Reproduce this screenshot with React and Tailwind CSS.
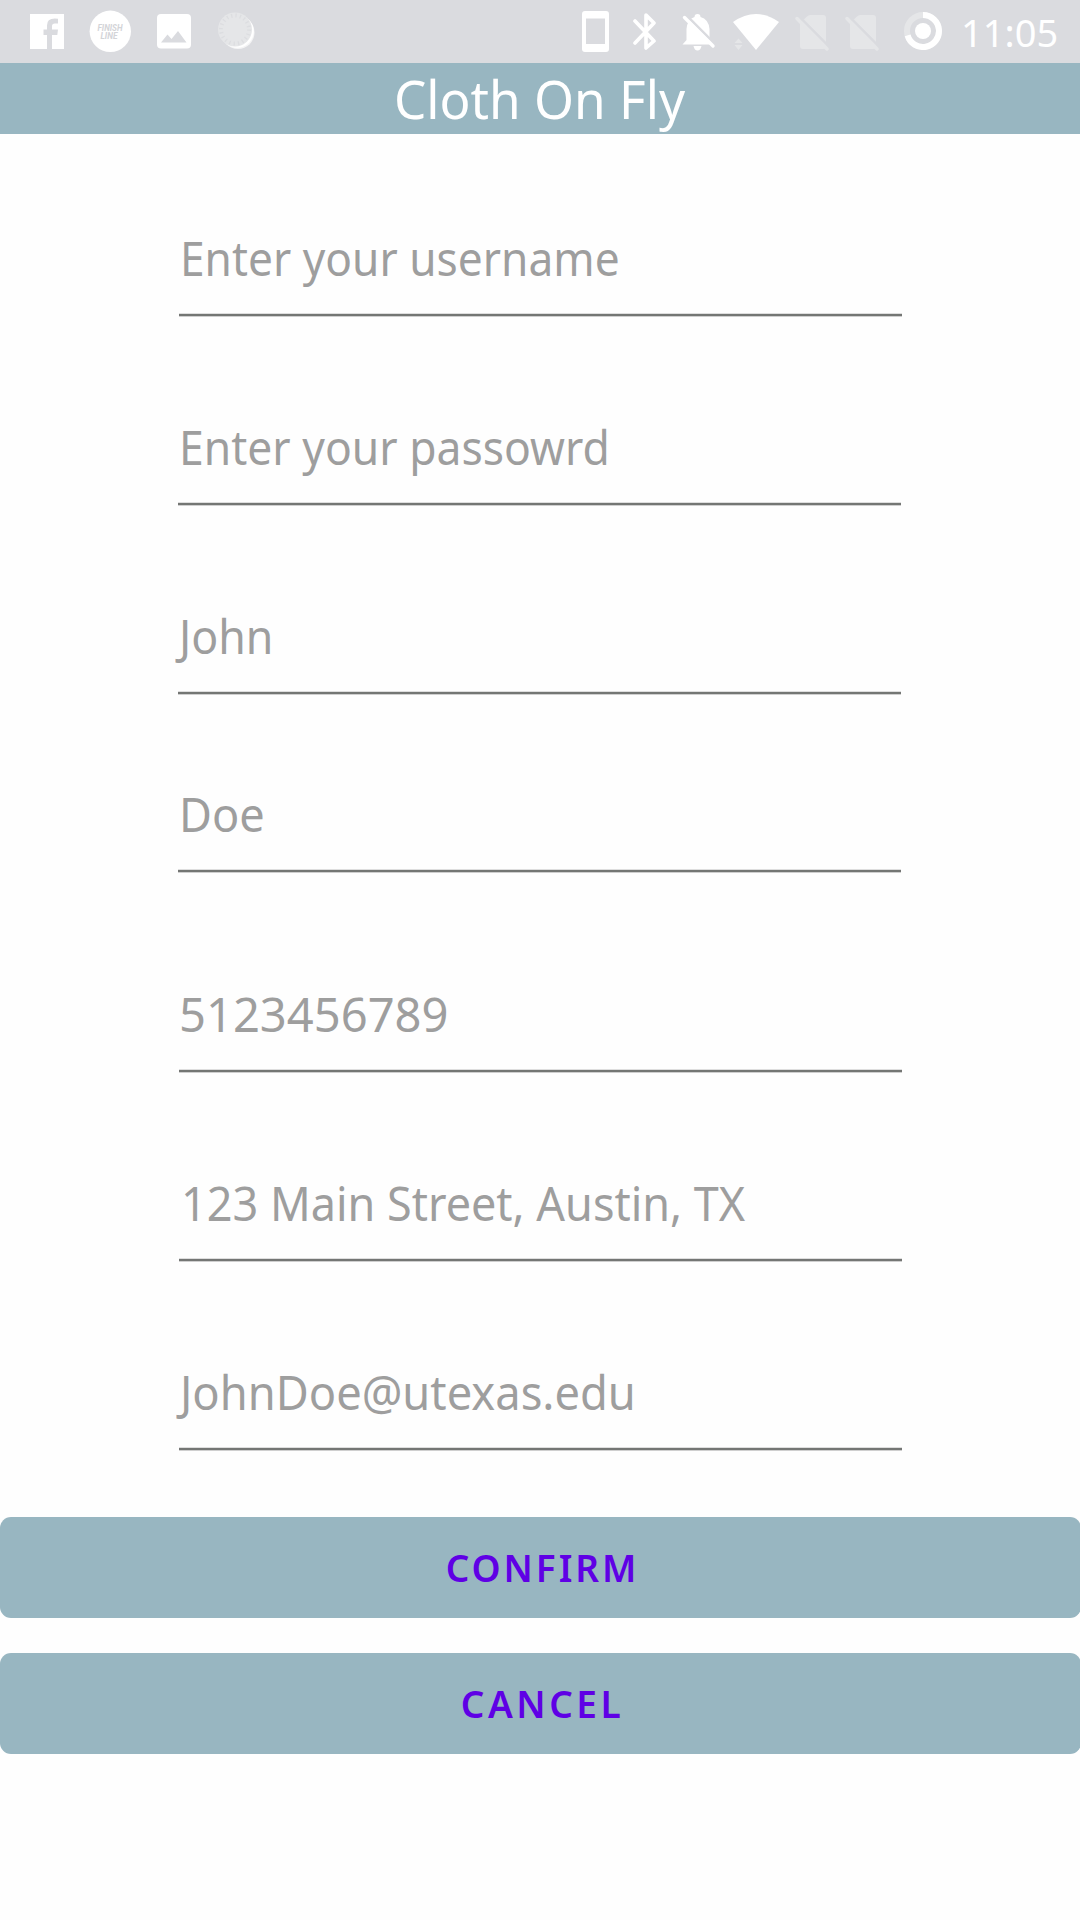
const fields = [
  { text: 'Enter your username', gap: 'mt-[93px]', line: 'ml-[179px]', fit: 'ml-[0.500px] scale-x-[0.932]' },
  { text: 'Enter your passowrd', gap: 'mt-[100px]', line: 'ml-[178px]', fit: 'ml-[0.500px] scale-x-[0.936]' },
  { text: 'John', gap: 'mt-[100px]', line: 'ml-[178px]', fit: 'ml-[1px] scale-x-[0.940]' },
  { text: 'Doe', gap: 'mt-[89px]', line: 'ml-[178px]', fit: 'ml-[1px] scale-x-[0.950]' },
  { text: '5123456789', gap: 'mt-[111px]', line: 'ml-[179px]', fit: 'scale-x-[0.992]' },
  { text: '123 Main Street, Austin, TX', gap: 'mt-[100px]', line: 'ml-[179px]', fit: 'ml-[2px] scale-x-[0.947]' },
  { text: 'JohnDoe@utexas.edu', gap: 'mt-[100px]', line: 'ml-[179px]', fit: 'ml-[1px] scale-x-[0.953]' },
];

function SimOff({ className }) {
  return (
    <svg className={className} width="36" height="40" viewBox="0 0 36 40">
      <path d="M6 9 L12 3.500 Q13.500 2 15 2 H28 Q31 2 31 5 V33 Q31 36 28 36 H8 Q5 36 5 33 V10 Z" fill="#e5e6e8" />
      <path d="M4 3.500 L36 35.500" stroke="#dadbdf" strokeWidth="2.500" />
      <path d="M2 5.500 L32 36" stroke="#e5e6e8" strokeWidth="3.400" strokeLinecap="round" />
    </svg>
  );
}

function StatusBar() {
  return (
    <div className="flex h-[63px] w-full shrink-0 items-start bg-[#dadbdf] text-white">
      <svg className="ml-[30px] mt-[14px] shrink-0" width="34" height="35" viewBox="0 0 34 35">
        <path fill="#fff" d="M0 0H34V35H22V21H27.300L28 15.500H22V12Q22 9.500 24.800 9.500H28V4.800Q16.800 3.300 17 11.500V15.500H13.500V21H17V35H0Z" />
      </svg>
      <svg className="ml-[25px] mt-[10px] shrink-0" width="42" height="42" viewBox="0 0 42 42">
        <circle cx="21.300" cy="21.300" r="20.700" fill="#fff" />
        <g fill="#d3d4d8" fontFamily="Roboto" fontSize="9" fontWeight="700" fontStyle="italic" textAnchor="middle">
          <text x="21" y="21.300" textLength="25" lengthAdjust="spacingAndGlyphs">FINISH</text>
          <text x="20" y="29.300" textLength="17" lengthAdjust="spacingAndGlyphs">LINE</text>
        </g>
      </svg>
      <svg className="ml-[26px] mt-[14px] shrink-0" width="34" height="35" viewBox="0 0 34 35">
        <rect width="34" height="34.500" rx="4" fill="#fff" />
        <path d="M4 28.500L10.500 20.500L14.500 25L21 17L29.500 28.500Z" fill="#dadbdf" />
      </svg>
      <svg className="ml-[26px] mt-[11px] shrink-0" width="39" height="39" viewBox="0 0 39 39">
        <circle cx="21" cy="21.500" r="16.500" fill="#f4f4f5" />
        <circle cx="20.300" cy="20.300" r="16.500" fill="#fff" />
        <circle cx="18" cy="18.500" r="17" fill="#e5e6e8" />
        <circle cx="18" cy="18.500" r="14" fill="none" stroke="#dcdde0" strokeWidth="4" strokeDasharray="1.300 3.100" />
      </svg>
      <svg className="ml-[326px] mt-[11px] shrink-0" width="27" height="41" viewBox="0 0 27 41">
        <path fill="#fff" fillRule="evenodd" d="M3 0H24Q27 0 27 3V38Q27 41 24 41H3Q0 41 0 38V3Q0 0 3 0ZM4 7.500V33H23V7.500Z" />
      </svg>
      <svg className="ml-[24px] mt-[13px] shrink-0" width="24" height="38" viewBox="0 0 24 38">
        <path d="M2 8L21 28L13 35V2L21 10L2 30" fill="none" stroke="#fff" strokeWidth="3.600" strokeLinejoin="round" strokeLinecap="round" />
      </svg>
      <svg className="ml-[25px] mt-[13px] shrink-0" width="34" height="38" viewBox="0 0 34 38">
        <path fill="#fff" d="M12.500 4Q12.500 1 15.500 1T18.500 4Q26.500 6 27.500 16V27L31.500 31.500H0.500L4.500 27V16Q5.500 6 12.500 4ZM11.500 33H19.500Q18.500 37.500 15.500 37.500T11.500 33Z" />
        <path d="M4 2L34 32" stroke="#dadbdf" strokeWidth="2.500" />
        <path d="M2.500 4.500L31 33" stroke="#fff" strokeWidth="3.400" strokeLinecap="round" />
      </svg>
      <svg className="ml-[17px] mt-[13px] shrink-0" width="46" height="38" viewBox="0 0 46 38">
        <path fill="#fff" d="M0 9Q23 -7 46 9L23 37Z" />
        <path fill="#e5e6e8" d="M1.500 30L5.500 25.500L9.500 30ZM1.500 32H9.500L5.500 37Z" />
      </svg>
      <SimOff className="ml-[16px] mt-[13px] shrink-0" />
      <SimOff className="ml-[14px] mt-[13px] shrink-0" />
      <svg className="ml-[23px] mt-[12px] shrink-0" width="38" height="38" viewBox="0 0 38 38">
        <circle cx="19" cy="19" r="16" fill="none" stroke="#e5e6e8" strokeWidth="6" />
        <path d="M19 3A16 16 0 1 1 3.600 23.400" fill="none" stroke="#fff" strokeWidth="6" />
        <circle cx="19" cy="19" r="8" fill="#fff" />
      </svg>
      <div className="ml-[19px] mt-[7px] whitespace-nowrap text-[38px] leading-[50px]">11:05</div>
    </div>
  );
}

function Field({ text, gap, line, fit }) {
  return (
    <div className={`${gap} ${line} flex h-[89px] w-[723px] items-end border-b-[2px] border-[#747674] pb-[24px] shadow-[0_1px_0_0_#cfcfcf,inset_0_-1px_0_0_#dedede]`}>
      <span className={`${fit} inline-block origin-left whitespace-nowrap text-[47.500px] leading-[64px] text-[#9e9e9e]`}>
        {text}
      </span>
    </div>
  );
}

function ActionButton({ children, spacing }) {
  return (
    <button className={`${spacing} h-[101px] w-[1081px] rounded-[11px] bg-[#98b6c1] pl-[4px] pt-[1px] text-[37px] font-semibold text-[#5f00e5]`}>
      {children}
    </button>
  );
}

export default function App() {
  return (
    <div className="flex h-[1920px] w-[1080px] flex-col overflow-hidden bg-[#fefefe] font-['Noto_Sans',sans-serif]">
      <StatusBar />
      <header className="flex h-[71px] shrink-0 items-center justify-center bg-[#98b6c1]">
        <h1 className="scale-x-[0.967] whitespace-nowrap text-[53px] leading-[70px] text-white">Cloth On Fly</h1>
      </header>
      <main className="flex flex-col">
        {fields.map((field) => (
          <Field key={field.text} {...field} />
        ))}
      </main>
      <div className="mt-[67px] flex flex-col gap-[35px]">
        <ActionButton spacing="tracking-[2.900px]">CONFIRM</ActionButton>
        <ActionButton spacing="tracking-[3.500px]">CANCEL</ActionButton>
      </div>
    </div>
  );
}
